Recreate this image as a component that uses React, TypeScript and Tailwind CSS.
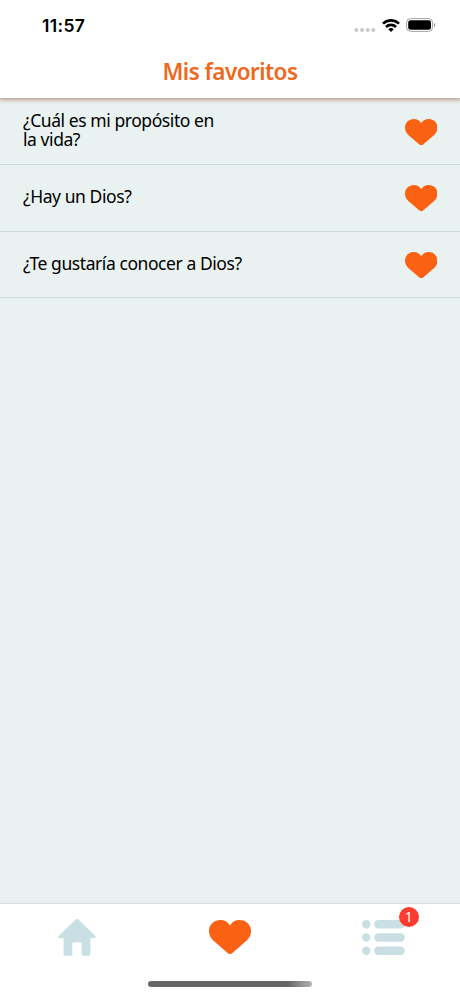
import React from 'react';

interface Favorite {
  id: number;
  title: string;
  textClass: string;
}

const favorites: Favorite[] = [
  { id: 1, title: '¿Cuál es mi propósito en la vida?', textClass: 'w-[200px] -mt-[4px] tracking-[-0.43px]' },
  { id: 2, title: '¿Hay un Dios?', textClass: '-mt-[2px] tracking-[-0.43px]' },
  { id: 3, title: '¿Te gustaría conocer a Dios?', textClass: '-mt-[2px] tracking-[-0.43px]' },
];

function HeartIcon({ className }: { className: string }) {
  return (
    <svg viewBox="0 0 42 34" className={className} fill="currentColor">
      <path d="M21 5.4C18.8 1.8 15.4 0 11.6 0 5 0 0 4.7 0 11c0 3.8 1.5 6.8 4.3 9.6l14.3 12.3c1.5 1.4 3.3 1.4 4.8 0l14.3-12.3c2.8-2.8 4.3-5.8 4.3-9.6C42 4.7 37 0 30.4 0 26.6 0 23.2 1.8 21 5.4Z" />
    </svg>
  );
}

function HomeIcon() {
  return (
    <svg viewBox="0 0 38 37" className="h-[37px] w-[38px]" fill="currentColor">
      <path d="M17.6.6a2 2 0 0 1 2.8 0L37.3 17c.9 1 .5 2.2-.8 2.2H32.4v16c0 1-.6 1.6-1.6 1.6h-7.1V24.8c0-.8-.5-1.2-1.2-1.2h-7c-.7 0-1.2.4-1.2 1.2v12H7.2c-1 0-1.6-.6-1.6-1.6v-16H1.5C.2 19.2-.2 18 .7 17Z" />
    </svg>
  );
}

function ListIcon() {
  return (
    <svg viewBox="0 0 43 35" className="h-[35px] w-[43px]" fill="currentColor">
      <circle cx="4.3" cy="4.2" r="4.2" />
      <circle cx="4.3" cy="17.5" r="4.2" />
      <circle cx="4.3" cy="30.8" r="4.2" />
      <rect x="12.2" y="0" width="30.6" height="8.4" rx="4.2" />
      <rect x="12.2" y="13.3" width="30.6" height="8.4" rx="4.2" />
      <rect x="12.2" y="26.6" width="30.6" height="8.4" rx="4.2" />
    </svg>
  );
}

function StatusBar() {
  return (
    <div className="flex h-[50px] items-center justify-between pl-[42px] pr-[24px]">
      <span className="mt-[2px] font-['Inter',sans-serif] text-[17.5px] font-semibold tracking-[0.35px] text-black">
        11:57
      </span>
      <div className="flex items-center">
        <svg viewBox="0 0 22 4" className="mt-[10px] h-1 w-[22px]" fill="#c9c9c9">
          <circle cx="2.3" cy="2" r="2" />
          <circle cx="8" cy="2" r="2" />
          <circle cx="13.7" cy="2" r="2" />
          <circle cx="19.3" cy="2" r="2" />
        </svg>
        <svg viewBox="0 0 18 13" className="ml-[6px] h-[13px] w-[18px]" fill="none" stroke="#000" strokeWidth="2.7">
          <path d="M1 4.6a11.4 11.4 0 0 1 16 0" />
          <path d="M4 8a7.1 7.1 0 0 1 10 0" />
          <path d="M9 13 6.3 10.2a3.9 3.9 0 0 1 5.4 0Z" fill="#000" stroke="none" />
        </svg>
        <svg viewBox="0 0 30 14" className="ml-[6px] h-[14px] w-[30px]">
          <rect x="0.6" y="0.6" width="26" height="12.8" rx="4" fill="none" stroke="#a3a3a3" />
          <rect x="2.2" y="2.2" width="22.8" height="9.6" rx="2.4" fill="#000" />
          <path d="M28 5v4.2c1.6-.7 1.6-3.5 0-4.2Z" fill="#8f8f8f" />
        </svg>
      </div>
    </div>
  );
}

function FavoriteRow({ favorite }: { favorite: Favorite }) {
  return (
    <li className="flex h-[66.4px] items-center justify-between border-b border-[#cfd8d8] pl-[23px] pr-[23px]">
      <span className={`text-[17.5px] leading-[19px] text-black ${favorite.textClass}`}>
        {favorite.title}
      </span>
      <HeartIcon className="mt-px h-[26.5px] w-[32.5px] text-[#fb6113]" />
    </li>
  );
}

export default function App() {
  return (
    <div className="flex h-[996px] w-[460px] flex-col overflow-hidden bg-[#e9f2f1] font-['Noto_Sans',sans-serif]">
      <header className="relative z-10 h-[98px] shrink-0 bg-white shadow-[0_1px_4px_1px_rgba(150,75,50,0.5)]">
        <StatusBar />
        <h1 className="text-center text-[22.5px] leading-[44px] font-semibold tracking-[-0.55px] text-[#ef681d]">
          Mis favoritos
        </h1>
      </header>

      <ul className="flex-1 pt-[0.9px]">
        {favorites.map((favorite) => (
          <FavoriteRow key={favorite.id} favorite={favorite} />
        ))}
      </ul>

      <nav className="h-[93px] shrink-0 border-t border-[#d9dfdf] bg-white">
        <div className="grid h-[66px] grid-cols-3 items-center justify-items-center text-[#cadfe3]">
          <HomeIcon />
          <HeartIcon className="h-[34px] w-[42px] text-[#fb6113]" />
          <div className="relative">
            <ListIcon />
            <span className="absolute -top-[13px] left-[37px] flex size-5 items-center justify-center rounded-full bg-[#ff3b30] text-sm leading-none text-white">
              1
            </span>
          </div>
        </div>
        <div className="mx-auto mt-[11px] h-[6px] w-[164px] rounded-full bg-linear-to-r from-[#666] from-85% to-[#b5b5b5]" />
      </nav>
    </div>
  );
}
